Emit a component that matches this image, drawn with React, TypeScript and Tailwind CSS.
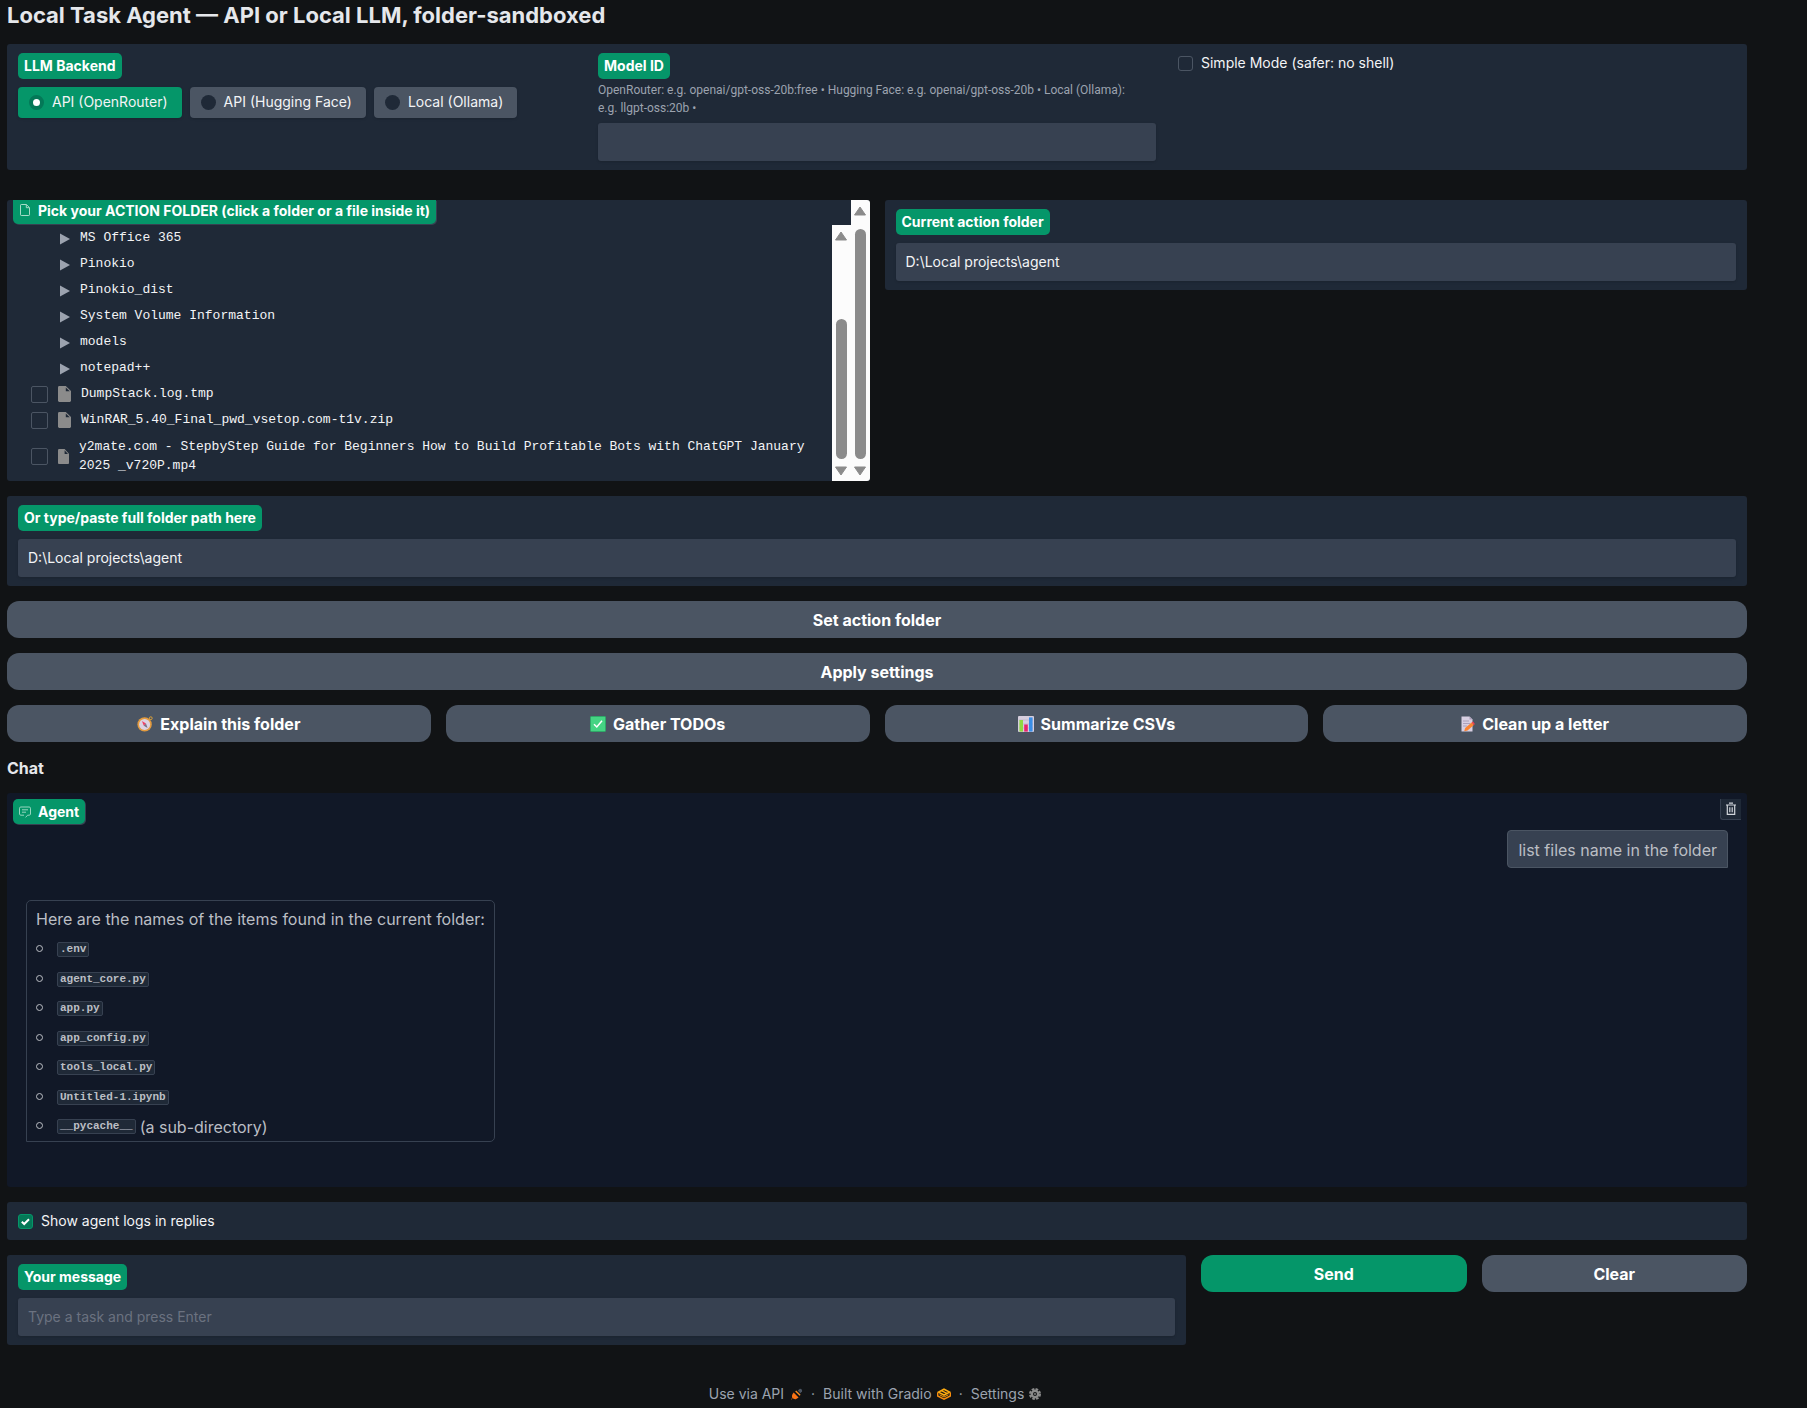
import { useState, type ReactNode } from "react";

const folders = [
  "MS Office 365",
  "Pinokio",
  "Pinokio_dist",
  "System Volume Information",
  "models",
  "notepad++",
];

const files = ["DumpStack.log.tmp", "WinRAR_5.40_Final_pwd_vsetop.com-t1v.zip"];

const longFile =
  "y2mate.com - StepbyStep Guide for Beginners How to Build Profitable Bots with ChatGPT January 2025 _v720P.mp4";

const listed = [
  { name: ".env" },
  { name: "agent_core.py" },
  { name: "app.py" },
  { name: "app_config.py" },
  { name: "tools_local.py" },
  { name: "Untitled-1.ipynb" },
  { name: "__pycache__", note: "(a sub-directory)" },
];

const backends = ["API (OpenRouter)", "API (Hugging Face)", "Local (Ollama)"];

const panel = "rounded-[3px] bg-[#1f2937]";
const pill =
  "block w-fit rounded-[5px] bg-[#059669] px-[6px] text-[14px] font-bold leading-[26px] text-white";
const field =
  "block h-[38px] w-full rounded-[3px] bg-[#374151] px-[10px] pb-[2px] text-[14px] text-[#f3f4f6] shadow-sm placeholder:text-[#6b7280] focus:outline-none";
const bigButton =
  "flex h-[37px] w-full items-center justify-center gap-[7px] rounded-[12px] bg-[#4b5563] text-[16px] font-bold text-white hover:bg-[#556070]";

/* ---------- icons ---------- */

function CompassIcon() {
  return (
    <svg width="16" height="16" viewBox="0 0 16 16" aria-hidden="true">
      <circle cx="13.8" cy="2.2" r="1.4" fill="none" stroke="#d9a03a" strokeWidth="1" />
      <circle cx="7.6" cy="8.4" r="7.2" fill="#e39b3f" />
      <circle cx="7.6" cy="8.4" r="5.5" fill="#ddd3e4" />
      <path d="M4.9 5 9 7.5 6.8 9.8Z" fill="#ee4266" />
      <path d="M10.6 11.9 9 7.5 6.8 9.8Z" fill="#7a7283" />
    </svg>
  );
}

function TickIcon() {
  return (
    <svg width="16" height="16" viewBox="0 0 16 16" aria-hidden="true">
      <rect x="0.5" y="0.5" width="15" height="15" rx="0.8" fill="#45d483" stroke="#2fa968" />
      <path d="M4 8.3 6.8 11 12 4.8" fill="none" stroke="#fff" strokeWidth="1.5" />
    </svg>
  );
}

function ChartIcon() {
  return (
    <svg width="16" height="16" viewBox="0 0 16 16" aria-hidden="true">
      <rect width="16" height="16" rx="1" fill="#d6cedd" />
      <path d="M1 4h14M1 8h14M1 12h14" stroke="#b9b0c2" strokeWidth="0.6" />
      <rect x="1.4" y="4" width="3.6" height="11.6" fill="#8fd93f" />
      <rect x="6.2" y="8.5" width="3.6" height="7.1" fill="#e6246d" />
      <rect x="11" y="1.4" width="3.6" height="14.2" fill="#3a8ee6" />
    </svg>
  );
}

function MemoIcon() {
  return (
    <svg width="14" height="16" viewBox="0 0 14 16" aria-hidden="true">
      <path d="M0.5 0.5h8l3 3v12h-11z" fill="#d8cfe2" />
      <path d="M8.5 0.5v3h3z" fill="#a99db8" />
      <path d="M2 5h6M2 7.5h7M2 10h4" stroke="#a195b1" strokeWidth="0.8" />
      <path d="M3.2 15.2 4.2 12 10.6 6.6 12.9 9 6.5 14.4Z" fill="#fb8432" />
      <path d="M10.6 6.6 12 5.5 13.9 7.9 12.9 9Z" fill="#ee3f52" />
    </svg>
  );
}

function PageIcon() {
  return (
    <svg width="12" height="12" viewBox="0 0 12 12" fill="none" stroke="#a7dcc8" aria-hidden="true">
      <path d="M1.5 1.2C1.5.8 1.8.5 2.2.5h5.2l3.1 3.1v7.2c0 .4-.3.7-.7.7H2.2c-.4 0-.7-.3-.7-.7z" />
      <path d="M7.3.6v3.1h3.1" />
    </svg>
  );
}

function ChatIcon() {
  return (
    <svg width="12" height="12" viewBox="0 0 12 12" fill="none" stroke="#a7dcc8" strokeWidth="0.9" aria-hidden="true">
      <path d="M5 9.2H1.8C1 9.2.5 8.6.5 8V2.2C.5 1.5 1 1 1.8 1h8.4c.8 0 1.3.5 1.3 1.2V8c0 .6-.5 1.2-1.3 1.2H8.6L6.6 11.4" />
      <path d="M3 3.8h6M3 6.2h4" />
    </svg>
  );
}

function TrashIcon() {
  return (
    <svg width="12" height="14" viewBox="0 0 12 14" fill="none" stroke="#d1d5db" strokeWidth="1.2" aria-hidden="true">
      <path d="M1 3h10M4 1.2h4M2.3 3v9.4h7.4V3" />
      <path d="M4.8 5.2v5M7.2 5.2v5" />
    </svg>
  );
}

function FileIcon({ small = false }: { small?: boolean }) {
  const size = small ? "h-[15px] w-[11px]" : "h-[16px] w-[13px]";
  return (
    <svg className={`${size} shrink-0`} viewBox="0 0 13 16" preserveAspectRatio="none" aria-hidden="true">
      <path d="M1.3 0H7.8L13 5V14.6C13 15.4 12.4 16 11.7 16H1.3C.6 16 0 15.4 0 14.6V1.4C0 .6.6 0 1.3 0z" fill="#8b8b8b" />
      <path d="M7.8 1.4V5.2H11.8z" fill="#1f2937" />
    </svg>
  );
}

function PlugIcon() {
  return (
    <svg width="12" height="12" viewBox="0 0 12 12" aria-hidden="true">
      <path d="M6.8 2.6 8.6.9C9.8.2 11.6 1.9 11 3.2L9.4 5.2z" fill="#4b5563" />
      <path d="M2.6 4.4 7.6 9.4 5.2 11C3.8 11.5 2.4 11 1.6 10L.2 11.9 0 11.7 1.3 9.6C.7 8.4.9 6.3 2.6 4.4z" fill="#f97316" />
      <path d="M4.2 3.4 5.2 2.4 9.6 6.8 8.6 7.8z" fill="#fb8c1e" />
    </svg>
  );
}

function GradioIcon() {
  return (
    <svg width="14" height="12" viewBox="0 0 14 12" fill="none" strokeWidth="1.6" aria-hidden="true">
      <path d="M1.4 4.1 7 1.2 12.6 4.1 7 7z" stroke="#ffab10" />
      <path d="M4.4 2.6 9.8 5.4" stroke="#ffab10" strokeWidth="1.2" />
      <path d="M.6 4.4V7.9L7 11.1 13.4 7.9V4.4" stroke="#f98c0c" />
      <path d="M2.6 6.8 7 9 11.4 6.8" stroke="#f99b0c" strokeWidth="1" />
    </svg>
  );
}

function GearIcon() {
  return (
    <svg width="12" height="12" viewBox="0 0 12 12" aria-hidden="true">
      <circle cx="6" cy="6" r="5" fill="none" stroke="#8b8b8b" strokeWidth="2" strokeDasharray="2.6 1.33" />
      <circle cx="6" cy="6" r="3.2" fill="none" stroke="#8b8b8b" strokeWidth="2.4" />
      <circle cx="6" cy="6" r="0.9" fill="#8b8b8b" />
    </svg>
  );
}

/* ---------- pieces ---------- */

function Field({
  id,
  label,
  value,
  placeholder,
}: {
  id: string;
  label: string;
  value?: string;
  placeholder?: string;
}) {
  return (
    <div className={`${panel} px-[11px] pb-[9px] pt-[9px]`}>
      <label htmlFor={id} className={pill}>
        {label}
      </label>
      <input
        id={id}
        type="text"
        defaultValue={value}
        placeholder={placeholder}
        className={`${field} mt-2`}
      />
    </div>
  );
}

function BlockLabel({ icon, className, children }: { icon: ReactNode; className: string; children: ReactNode }) {
  return (
    <div
      className={`ml-[6px] flex w-fit items-center gap-[7px] bg-[#059669] px-[6px] text-[14px] font-bold text-white shadow-[1px_1px_0_#374151] ${className}`}
    >
      {icon}
      {children}
    </div>
  );
}

// always-visible scrollbar: arrow, thumb, arrow
function Scrollbar({ start }: { start: string }) {
  return (
    <div className="flex w-[19px] shrink-0 flex-col items-center bg-[#fcfcfc] pb-[5px] pt-[6px]">
      <svg width="12" height="10" viewBox="0 0 12 10" className="shrink-0" aria-hidden="true">
        <path d="M6 1 11.5 9H.5z" fill="#8b8b8b" stroke="#8b8b8b" strokeLinejoin="round" />
      </svg>
      <div className={`${start} mb-[7px] w-[11px] flex-1 rounded-full bg-[#8b8b8b]`} />
      <svg width="12" height="10" viewBox="0 0 12 10" className="shrink-0" aria-hidden="true">
        <path d="M6 9 11.5 1H.5z" fill="#8b8b8b" stroke="#8b8b8b" strokeLinejoin="round" />
      </svg>
    </div>
  );
}

function FileCheck({ name }: { name: string }) {
  return (
    <input
      type="checkbox"
      aria-label={name}
      className="size-[17px] shrink-0 appearance-none rounded-[2px] border border-[#4b5563] checked:bg-[#059669]"
    />
  );
}

function FileTree() {
  return (
    <ul className="min-w-0 flex-1 font-['Liberation_Mono',monospace] text-[13px] text-[#f3f4f6]">
      {folders.map((name) => (
        <li key={name} className="flex h-[26px] items-center gap-[10px] pl-[53px]">
          <svg width="10" height="12" viewBox="0 0 10 12" className="mt-[2px] shrink-0" aria-hidden="true">
            <path d="M0 .5v11L10 6z" fill="#9ca3af" />
          </svg>
          {name}
        </li>
      ))}
      {files.map((name) => (
        <li key={name} className="flex h-[26px] items-center gap-[10px] pl-6">
          <FileCheck name={name} />
          <FileIcon />
          {name}
        </li>
      ))}
      <li className="flex items-center gap-[10px] pl-6 pt-1 leading-[19px]">
        <FileCheck name={longFile} />
        <FileIcon small />
        <span className="pr-2">{longFile}</span>
      </li>
    </ul>
  );
}

export default function App() {
  const [backend, setBackend] = useState(backends[0]);
  const [showLogs, setShowLogs] = useState(true);

  return (
    <main className="min-h-screen bg-[#111315] pl-[7px] pr-[60px] pt-[3px] font-['Inter',sans-serif]">
      <h1 className="text-[22px] font-bold leading-6 text-[#e5e7eb]">
        Local Task Agent — API or Local LLM, folder-sandboxed
      </h1>

      {/* backend settings */}
      <section className={`${panel} mt-[17px] grid grid-cols-3 gap-[22px] px-[11px] py-[9px]`}>
        <fieldset>
          <legend className={pill}>LLM Backend</legend>
          <div className="mt-2 flex flex-wrap gap-2">
            {backends.map((name) => (
              <label
                key={name}
                className={`flex h-[31px] items-center gap-2 rounded-[4px] pl-[11px] pr-[14px] text-[14px] text-[#f3f4f6] shadow-sm ${
                  backend === name ? "bg-[#059669]" : "bg-[#4b5563]"
                }`}
              >
                <input
                  type="radio"
                  name="backend"
                  checked={backend === name}
                  onChange={() => setBackend(name)}
                  className="size-[15px] shrink-0 appearance-none rounded-full bg-[#1f2937] checked:border-[4px] checked:border-[#047857] checked:bg-white"
                />
                <span className="pb-[2px]">{name}</span>
              </label>
            ))}
          </div>
        </fieldset>
        <div>
          <label htmlFor="model" className={pill}>
            Model ID
          </label>
          <p className="mb-[6px] mt-[2px] pr-4 font-['Roboto',sans-serif] text-[12px] leading-[18px] text-[#9ca3af]">
            OpenRouter: e.g. openai/gpt-oss-20b:free • Hugging Face: e.g. openai/gpt-oss-20b • Local (Ollama): e.g.
            llgpt-oss:20b •
          </p>
          <input id="model" type="text" className={field} />
        </div>
        <label className="flex h-5 items-center gap-2 text-[14px] text-[#f3f4f6]">
          <input
            type="checkbox"
            className="size-[15px] shrink-0 appearance-none rounded-[3px] border border-[#4b5563] checked:bg-[#047857]"
          />
          <span className="pb-[2px]">Simple Mode (safer: no shell)</span>
        </label>
      </section>

      {/* folder picker */}
      <section className="mt-[30px] grid grid-cols-2 items-start gap-[15px]">
        <div className={`${panel} flex h-[281px] overflow-hidden`}>
          <div className="flex min-w-0 flex-1 flex-col">
            <BlockLabel icon={<PageIcon />} className="h-6 shrink-0 rounded-b-[5px] pb-[4px]">
              Pick your ACTION FOLDER (click a folder or a file inside it)
            </BlockLabel>
            <div className="mt-px flex flex-1">
              <FileTree />
              <Scrollbar start="mt-[78px]" />
            </div>
          </div>
          <Scrollbar start="mt-[13px]" />
        </div>
        <Field id="current" label="Current action folder" value="D:\Local projects\agent" />
      </section>

      <section className="mt-[15px] flex flex-col gap-[15px]">
        <Field id="path" label="Or type/paste full folder path here" value="D:\Local projects\agent" />
        <button type="button" className={bigButton}>
          Set action folder
        </button>
        <button type="button" className={bigButton}>
          Apply settings
        </button>
        <div className="grid grid-cols-4 gap-[15px]">
          <button type="button" className={bigButton}>
            <CompassIcon />
            Explain this folder
          </button>
          <button type="button" className={bigButton}>
            <TickIcon />
            Gather TODOs
          </button>
          <button type="button" className={bigButton}>
            <ChartIcon />
            Summarize CSVs
          </button>
          <button type="button" className={bigButton}>
            <MemoIcon />
            Clean up a letter
          </button>
        </div>
      </section>

      <h2 className="mt-[14px] text-[16px] font-bold leading-6 text-[#e5e7eb]">Chat</h2>

      {/* conversation */}
      <section className="mt-[13px] h-[394px] rounded-[3px] bg-[#111827] pt-[6px] text-[16px] text-[#bbbec4]">
        <div className="flex items-start justify-between pr-[6px]">
          <BlockLabel icon={<ChatIcon />} className="h-[25px] rounded-[5px]">
            Agent
          </BlockLabel>
          <button
            type="button"
            aria-label="Clear conversation"
            className="grid size-[21px] place-items-center rounded-bl-[3px] border-b border-l border-[#374151] bg-[#1f2937]"
          >
            <TrashIcon />
          </button>
        </div>
        <p className="ml-auto mr-[19px] mt-[6px] flex h-[38px] w-fit items-center rounded-[4px] rounded-br-none border border-[#4b5563] bg-[#374151] px-[10px] pt-[2px]">
          list files name in the folder
        </p>
        <div className="ml-[19px] mt-8 w-fit rounded-[5px] rounded-bl-none border border-[#374151] px-[9px] pt-[6px]">
          <p className="leading-6">Here are the names of the items found in the current folder:</p>
          <ul className="mt-1">
            {listed.map((f) => (
              <li key={f.name} className="flex h-[29px] items-center even:h-[30px]">
                <span className="mb-[2px] mr-[14px] size-[7px] rounded-full border border-[#bbbec4]" />
                <code className="rounded-[2px] border border-[#374151] bg-[#1f2937] px-[2px] font-['Liberation_Mono',monospace] text-[11px] font-bold leading-[13px]">
                  {f.name}
                </code>
                {f.note && <span className="ml-1">{f.note}</span>}
              </li>
            ))}
          </ul>
        </div>
      </section>

      <section className={`${panel} mt-[15px] flex h-[38px] items-center px-[11px]`}>
        <label className="flex items-center gap-2 text-[14px] text-[#f3f4f6]">
          <span className="grid size-[15px] place-items-center">
            <input
              type="checkbox"
              checked={showLogs}
              onChange={(e) => setShowLogs(e.target.checked)}
              className="col-start-1 row-start-1 size-[15px] appearance-none rounded-[3px] border border-[#4b5563] checked:border-[#059669] checked:bg-[#047857]"
            />
            {showLogs && (
              <svg
                width="11"
                height="11"
                viewBox="0 0 11 11"
                className="pointer-events-none col-start-1 row-start-1"
                aria-hidden="true"
              >
                <path d="M1.8 5.7 4.2 8 9 3.2" fill="none" stroke="#fff" strokeWidth="2" />
              </svg>
            )}
          </span>
          <span className="pb-[2px]">Show agent logs in replies</span>
        </label>
      </section>

      {/* message box */}
      <section className="mt-[15px] flex items-start gap-[15px]">
        <div className="flex-1">
          <Field id="message" label="Your message" placeholder="Type a task and press Enter" />
        </div>
        <div className="grid w-[546px] grid-cols-2 gap-[15px]">
          <button
            type="button"
            className="h-[37px] rounded-[12px] bg-[#059669] text-[16px] font-bold text-white hover:bg-[#0aa876]"
          >
            Send
          </button>
          <button type="button" className={bigButton}>
            Clear
          </button>
        </div>
      </section>

      <footer className="mt-[38px] flex items-center justify-center gap-2 pr-1 text-[14px] leading-[22px] text-[#9ca3af]">
        <a href="#api" className="flex items-center gap-[7px]">
          Use via API <PlugIcon />
        </a>
        <span>·</span>
        <a href="#gradio" className="flex items-center gap-[5px]">
          Built with Gradio <GradioIcon />
        </a>
        <span>·</span>
        <a href="#settings" className="flex items-center gap-[5px]">
          Settings <GearIcon />
        </a>
      </footer>
    </main>
  );
}
